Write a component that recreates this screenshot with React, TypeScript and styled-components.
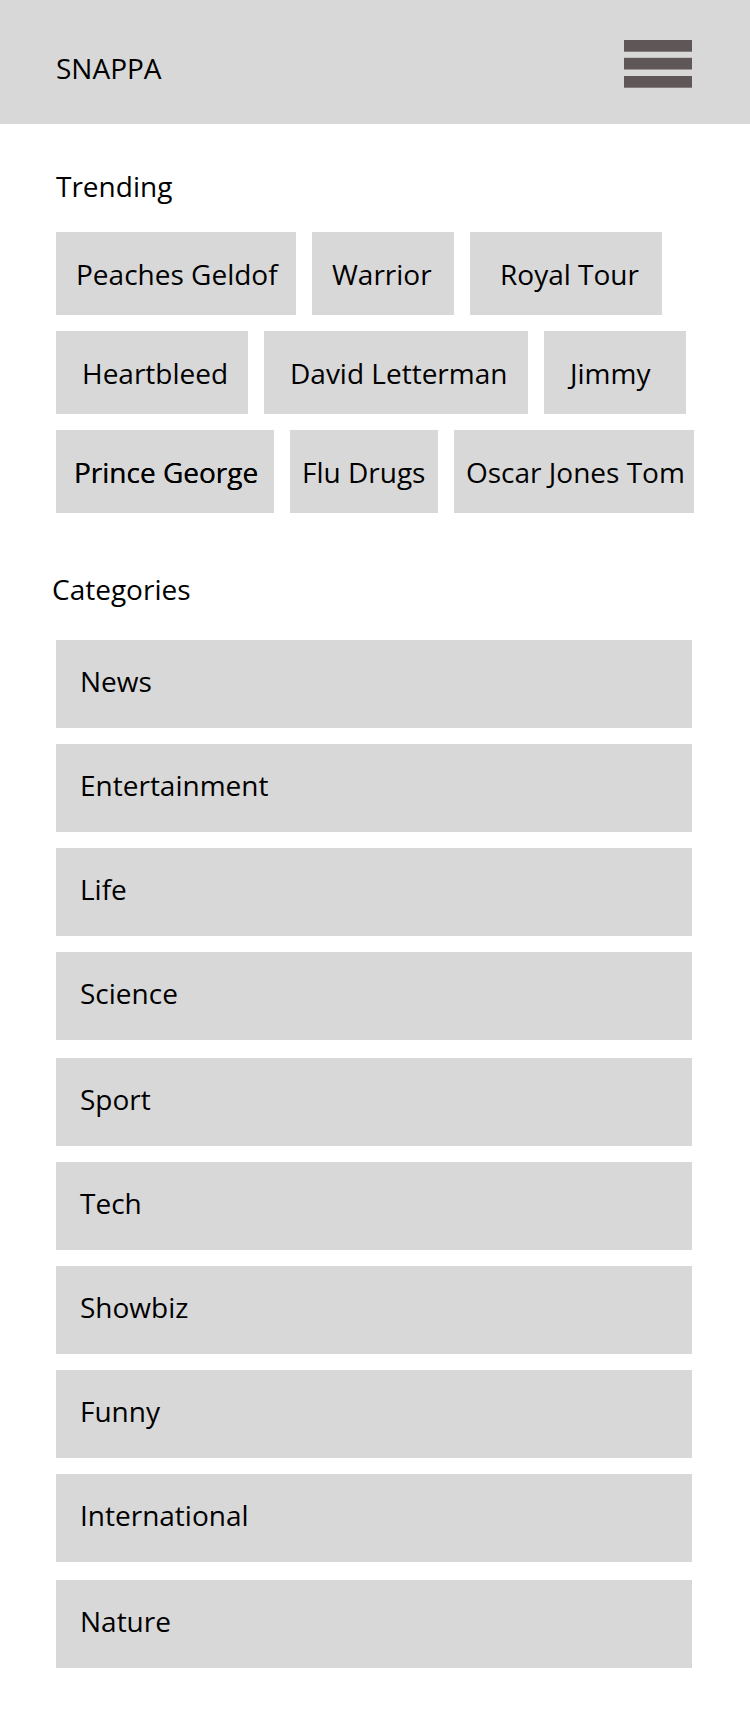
import React from "react";
import styled, { createGlobalStyle, css } from "styled-components";

const GlobalStyle = createGlobalStyle`
  *, *::before, *::after {
    box-sizing: border-box;
  }

  body {
    margin: 0;
    background: #ffffff;
    color: #000000;
    font-family: "Open Sans", "Noto Sans", sans-serif;
    font-size: 28px;
    line-height: 38px;
  }
`;

const Page = styled.div`
  padding-bottom: 48px;
`;

const Header = styled.header`
  display: flex;
  justify-content: space-between;
  align-items: flex-start;
  padding: 40px 58px 36px 56px;
  background: #d8d8d8;
`;

const Brand = styled.a`
  padding-top: 9px;
  color: inherit;
  text-decoration: none;
`;

const MenuButton = styled.button`
  display: block;
  padding: 0;
  border: 0;
  background: none;
  cursor: pointer;

  svg {
    display: block;
  }
`;

const TrendingSection = styled.section`
  padding: 43px 56px 0;
`;

const CategoriesSection = styled.section`
  padding: 57px 58px 0 52px;
`;

const Heading = styled.h2`
  margin: 0;
  font-size: inherit;
  font-weight: 400;
`;

const ChipList = styled.ul`
  display: flex;
  flex-wrap: wrap;
  gap: 16px;
  margin: 27px 0 0;
  padding: 0;
  list-style: none;
`;

const Chip = styled.a<{ $width: number; $inset: number; $strong?: boolean }>`
  display: block;
  width: ${({ $width }) => $width}px;
  padding: 23px 0 22px ${({ $inset }) => $inset}px;
  background: #d8d8d8;
  color: inherit;
  text-decoration: none;
  white-space: nowrap;
  ${({ $strong }) =>
    $strong &&
    css`
      text-shadow: 0 0 0 #000000;
    `}
`;

const CategoryList = styled.ul`
  display: flex;
  flex-direction: column;
  gap: 16px;
  margin: 32px 0 0;
  padding: 0 0 0 4px;
  list-style: none;
`;

const CategoryItem = styled.li`
  &:nth-child(5n) {
    margin-top: 2px;
  }
`;

const CategoryLink = styled.a`
  display: block;
  padding: 22px 24px 28px;
  background: #d8d8d8;
  color: inherit;
  text-decoration: none;
`;

interface Topic {
  label: string;
  width: number;
  inset: number;
  strong?: boolean;
}

const topics: Topic[] = [
  { label: "Peaches Geldof", width: 240, inset: 20 },
  { label: "Warrior", width: 142, inset: 20 },
  { label: "Royal Tour", width: 192, inset: 30 },
  { label: "Heartbleed", width: 192, inset: 26 },
  { label: "David Letterman", width: 264, inset: 26 },
  { label: "Jimmy", width: 142, inset: 26 },
  { label: "Prince George", width: 218, inset: 18, strong: true },
  { label: "Flu Drugs", width: 148, inset: 12 },
  { label: "Oscar Jones Tom", width: 240, inset: 12 },
];

const categories = [
  "News",
  "Entertainment",
  "Life",
  "Science",
  "Sport",
  "Tech",
  "Showbiz",
  "Funny",
  "International",
  "Nature",
];

const MenuIcon = () => (
  <svg width="68" height="48" viewBox="0 0 68 48" fill="#5f5757" aria-hidden="true">
    <rect y="0" width="68" height="11.7" />
    <rect y="17.8" width="68" height="11.7" />
    <rect y="36" width="68" height="11.7" />
  </svg>
);

export default function App() {
  return (
    <Page>
      <GlobalStyle />
      <Header>
        <Brand href="#">SNAPPA</Brand>
        <MenuButton type="button" aria-label="Menu">
          <MenuIcon />
        </MenuButton>
      </Header>
      <main>
        <TrendingSection>
          <Heading>Trending</Heading>
          <ChipList>
            {topics.map((topic) => (
              <li key={topic.label}>
                <Chip href="#" $width={topic.width} $inset={topic.inset} $strong={topic.strong}>
                  {topic.label}
                </Chip>
              </li>
            ))}
          </ChipList>
        </TrendingSection>
        <CategoriesSection>
          <Heading>Categories</Heading>
          <CategoryList>
            {categories.map((category) => (
              <CategoryItem key={category}>
                <CategoryLink href="#">{category}</CategoryLink>
              </CategoryItem>
            ))}
          </CategoryList>
        </CategoriesSection>
      </main>
    </Page>
  );
}
